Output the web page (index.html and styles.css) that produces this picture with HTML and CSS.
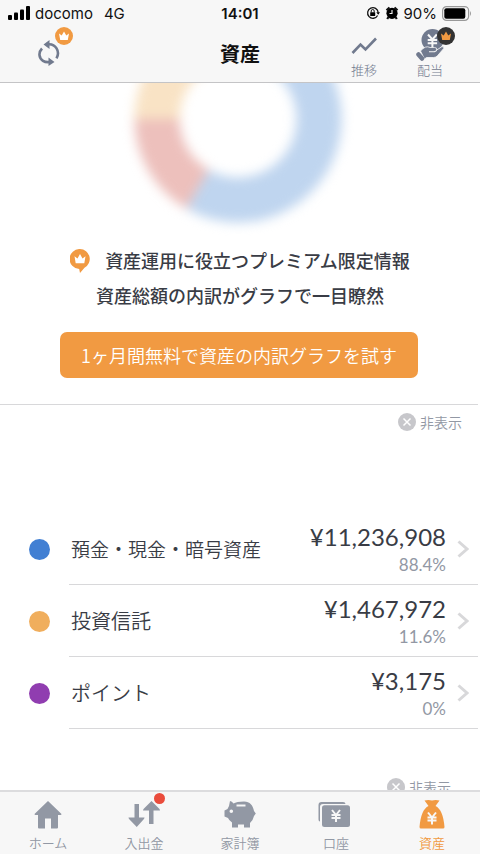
FILE: index.html
```html
<!DOCTYPE html>
<html lang="ja">
<head>
<meta charset="utf-8">
<meta name="viewport" content="width=device-width, initial-scale=1">
<title>資産</title>
<link rel="stylesheet" href="styles.css">
</head>
<body>
<div class="app">
  <header class="top">
    <div class="status">
      <div class="status-side">
        <svg class="signal" viewBox="0 0 22 14" aria-hidden="true"><rect x="0" y="9" width="4" height="5" rx="1"/><rect x="6" y="6.500" width="4" height="7.500" rx="1"/><rect x="12" y="3.500" width="4" height="10.500" rx="1"/><rect x="18" y="0" width="4" height="14" rx="1"/></svg>
        <span>docomo</span><span class="network">4G</span>
      </div>
      <time class="clock">14:01</time>
      <div class="status-side status-right">
        <svg class="lock" viewBox="0 0 14 14" aria-hidden="true"><path d="M11.600 9.500A5.300 5.300 0 1 1 12.200 6.500" fill="none" stroke="#111" stroke-width="1.300"/><path d="M10.300 6.200h3.700l-1.800 2.600z"/><rect x="4.200" y="6.200" width="5" height="3.800" rx=".5"/><path d="M5.200 6.500V5a1.500 1.500 0 0 1 3 0v1.500" fill="none" stroke="#111"/></svg>
        <svg class="alarm" viewBox="0 0 14 14" aria-hidden="true"><circle cx="7" cy="7.300" r="5.600"/><path d="M1.500 4.200 4.500 1.500M12.500 4.200 9.500 1.500M3.500 11 2.200 13M10.500 11l1.300 2" fill="none" stroke="#111" stroke-width="2.200"/><path d="M7 4v3.500H4.500" fill="none" stroke="#f7f7f7" stroke-width="1.100"/></svg>
        <span>90%</span>
        <svg class="battery" viewBox="0 0 30 15" aria-hidden="true"><rect x=".6" y=".6" width="26" height="13.800" rx="4" fill="none" stroke="#999" stroke-width="1.200"/><rect x="2.300" y="2.300" width="21" height="10.400" rx="2"/><path d="M28 5v5q2-2.500 0-5" fill="#999"/></svg>
      </div>
    </div>
    <div class="navbar">
      <button class="refresh" aria-label="更新">
        <svg viewBox="0 0 22 26" aria-hidden="true"><path d="M4 8.500C.2 12.500.8 18 5 20.800q2.500 1.600 6.500 1.200M10 4.300c7.500-.8 12.500 7 8.500 14" fill="none" stroke="#717a8e" stroke-width="2.600"/><path d="M5.500 4.500 11.500 0v9zM16.500 22 10.500 17.500v8.500z" fill="#717a8e"/></svg>
        <svg class="badge" viewBox="0 0 18 18" aria-hidden="true"><circle cx="9" cy="9" r="9" fill="#f19a42"/><path d="M4 6.500 6.700 8.500 9 4.500l2.300 4L14 6.500 12.800 13H5.200z" fill="#fff"/></svg>
      </button>
      <h1>資産</h1>
      <div class="actions">
        <button class="action">
          <svg class="trend" viewBox="0 0 28 32" aria-hidden="true"><path d="m2.500 24 8-8.500 5 5L26 9.500" fill="none" stroke="#717a8e" stroke-width="2.600"/></svg>
          <span>推移</span>
        </button>
        <button class="action">
          <svg viewBox="0 0 28 32" aria-hidden="true"><circle cx="16.500" cy="11" r="11" fill="#717a8e"/><path d="m12 5.500 4.400 5 4.400-5M16.400 10.500v8M11.700 11h9.400M11.700 14.300h9.400" fill="none" stroke="#f7f7f7" stroke-width="2"/><path d="M4.500 22q5-6 9.500-3.500h4.500q3 0 2.200 2.500l5-3.200q2.800-1 2 1.700l-6 7q-1.500 2-4 2h-7.200L8.500 30z" fill="#717a8e" stroke="#f7f7f7" stroke-width=".8"/><path d="m13 22.800 5.500-.2q2-.3 2.200-1.800" fill="none" stroke="#f7f7f7" stroke-width="1.100"/><path d="m2.500 25.500 3.500 4" stroke="#717a8e" stroke-width="4.500" stroke-linecap="round"/></svg>
          <svg class="badge" viewBox="0 0 18 18" aria-hidden="true"><circle cx="9" cy="9" r="9" fill="#333"/><path d="M4 6.500 6.700 8.500 9 4.500l2.300 4L14 6.500 12.800 13H5.200z" fill="#f19a42"/></svg>
          <span>配当</span>
        </button>
      </div>
    </div>
  </header>

  <main class="content">
    <section class="promo">
      <div class="chart-clip">
        <svg class="chart" viewBox="0 0 260 254" role="img" aria-label="資産内訳グラフ">
          <g fill="none" stroke-width="45"><path d="M129 49A81 81 0 1 1 88.500 200.100" stroke="#bfd5ef"/><path d="M88.500 200.100A81 81 0 0 1 48 130" stroke="#edc0bc"/><path d="M48 130A81 81 0 0 1 129 49" stroke="#f9e3c5"/></g>
        </svg>
      </div>
      <p class="lead"><svg class="pin" viewBox="0 0 20 24" aria-hidden="true"><path d="M10 0a10 10 0 0 1 4.500 18.800L10 24l-.8-4A10 10 0 1 1 10 0" fill="#f19a42"/><path d="M4.500 7.300 7.500 9.500 10 5l2.500 4.500 3-2.200-1.200 7H5.700z" fill="#fff"/></svg>資産運用に役立つプレミアム限定情報</p>
      <p class="lead">資産総額の内訳がグラフで一目瞭然</p>
      <button class="trial">1ヶ月間無料で資産の内訳グラフを試す</button>
    </section>
    <div class="dismiss-row">
      <button class="dismiss"><svg viewBox="0 0 18 18" aria-hidden="true"><circle cx="9" cy="9" r="9" fill="#c7c7cb"/><path d="m5.500 5.500 7 7m0-7-7 7" stroke="#fff" stroke-width="1.500"/></svg>非表示</button>
    </div>
    <ul class="assets">
      <li><a href="#deposit"><span class="dot blue"></span><span class="row"><span class="name long">預金・現金・暗号資産</span><span class="value"><strong>¥11,236,908</strong><small>88.4%</small></span><svg class="chevron" viewBox="0 0 12 18" aria-hidden="true"><path d="m1.500 1.500 8.500 7.500-8.500 7.500"/></svg></span></a></li>
      <li><a href="#fund"><span class="dot orange"></span><span class="row"><span class="name">投資信託</span><span class="value"><strong>¥1,467,972</strong><small>11.6%</small></span><svg class="chevron" viewBox="0 0 12 18" aria-hidden="true"><path d="m1.500 1.500 8.500 7.500-8.500 7.500"/></svg></span></a></li>
      <li><a href="#point"><span class="dot purple"></span><span class="row"><span class="name">ポイント</span><span class="value"><strong>¥3,175</strong><small>0%</small></span><svg class="chevron" viewBox="0 0 12 18" aria-hidden="true"><path d="m1.500 1.500 8.500 7.500-8.500 7.500"/></svg></span></a></li>
    </ul>
    <div class="dismiss-row next">
      <button class="dismiss"><svg viewBox="0 0 18 18" aria-hidden="true"><circle cx="9" cy="9" r="9" fill="#c7c7cb"/><path d="m5.500 5.500 7 7m0-7-7 7" stroke="#fff" stroke-width="1.500"/></svg>非表示</button>
    </div>
  </main>

  <nav class="tabs">
    <a href="#home"><svg viewBox="0 0 32 32" aria-hidden="true"><path d="M16 2 29.500 15q0 1-1 1H26V28.500q0 1-1 1h-6V19.500h-6v10H7q-1 0-1-1V16H3.500q-1 0-1-1z"/></svg>ホーム</a>
    <a href="#flow"><svg viewBox="0 0 32 32" aria-hidden="true"><path d="M6.500 5h4.500v13.500h5.500q0 1-1 2L8.750 28 1.500 20.500q-1-1-1-2h6zM21 25h4.500V11.500H32q0-1-1-2l-7.500-7.500-7.500 7.500q-1 1-1 2h6z"/></svg><span class="notice"></span>入出金</a>
    <a href="#budget"><svg viewBox="0 0 32 32" aria-hidden="true"><path fill-rule="evenodd" d="M6 2q2 .2 3.500 2.500 3-2 10.500-2c6 0 9 4 10 9.500l1.800 2.500L30 17q-.8 4-4 7V28.500h-6V25.500h-6V28.500H8V23.500Q5 21.500 4 19l-3.500-1.500v-6L3.500 10 5 7zM7.300 10.500a1.800 1.800 0 1 0 0 3.600A1.800 1.800 0 0 0 7.300 10.500M12.500 7.500h9v-2h-9z"/></svg>家計簿</a>
    <a href="#accounts"><svg class="cards" viewBox="0 0 32 32" aria-hidden="true"><path d="M2 22.500q-1.500 0-1.500-2V6q0-3 3-3H25q2.500 0 2.500 2H5Q2 5 2 8z"/><rect x="4" y="6.300" width="28" height="21.700" rx="2.500"/><path class="yen" d="m14 11 4 5 4-5m-4 5v7m-4.500-7h9m-9 3h9"/></svg>口座</a>
    <a class="current" href="#assets" aria-current="page"><svg viewBox="0 0 32 32" aria-hidden="true"><path d="M8.500 1.500q4-1.200 7.500 0 3.500-1.200 7.500 0L19.500 7q7.500 3.500 9 21 0 1.500-1.500 1.500H5q-1.500 0-1.500-1.500 1.500-17.500 9-21z"/><path class="yen" d="m12 13.500 4 5 4-5m-4 5v7m-4.500-7h9m-9 3h9"/></svg>資産</a>
  </nav>
</div>
</body>
</html>
```
FILE: styles.css
```css
* { box-sizing: border-box; }

body {
  margin: 0;
  background: #fff;
  color: #393c45;
  font-family: "Noto Sans CJK JP", sans-serif;
}

button {
  padding: 0;
  border: 0;
  background: none;
  color: inherit;
  font: inherit;
}

a { color: inherit; text-decoration: none; }
p, h1, ul { margin: 0; padding: 0; }
svg { display: block; flex-shrink: 0; }

.app {
  display: flex;
  flex-direction: column;
  height: 100vh;
  overflow: hidden;
}

.top {
  flex-shrink: 0;
  background: #f7f7f7;
  border-bottom: 1px solid #c4c4c6;
}

.status {
  display: grid;
  grid-template-columns: 1fr auto 1fr;
  align-items: center;
  height: 26px;
  padding: 0 8px;
  color: #111;
  font-family: Inter, sans-serif;
  font-size: 15px;
}

.status-side { display: flex; align-items: center; gap: 5px; }
.status-right { justify-content: flex-end; }
.network { margin-left: 6px; }
.clock { font-weight: 600; }
.signal { width: 22px; height: 14px; }
.lock, .alarm { width: 14px; height: 14px; }
.battery { width: 30px; height: 15px; }

.navbar {
  display: grid;
  grid-template-columns: 1fr auto 1fr;
  height: 56px;
}

.navbar h1 {
  padding-top: 13px;
  color: #111;
  font-size: 20px;
  font-weight: 700;
  line-height: 30px;
}

.refresh {
  position: relative;
  justify-self: start;
  align-self: start;
  margin: 14px 0 0 38px;
}

.refresh svg:first-child { width: 22px; height: 26px; }

.badge {
  position: absolute;
  width: 18px;
  height: 18px;
}

.refresh .badge { top: -13px; left: 17px; }

.actions {
  display: flex;
  justify-content: flex-end;
  gap: 38px;
  padding-right: 36px;
}

.action {
  position: relative;
  display: flex;
  flex-direction: column;
  align-items: center;
  justify-content: flex-end;
  padding-bottom: 3px;
  color: #717a8e;
  font-size: 13px;
  font-weight: 300;
  line-height: 18px;
}

.action svg:first-child { width: 28px; height: 32px; }
.action .badge { top: 1px; right: -11px; }

.content {
  flex: 1;
  min-height: 0;
  overflow: hidden;
}

.promo {
  display: flex;
  flex-direction: column;
  align-items: center;
  margin-right: 2px;
  padding-bottom: 26px;
  border-bottom: 1px solid #d8d8da;
}

.chart-clip {
  display: flex;
  align-items: flex-end;
  height: 160px;
  overflow: hidden;
}

.chart { width: 260px; height: 254px; filter: blur(6px); }

.lead {
  display: flex;
  align-items: center;
  gap: 15px;
  padding-left: 2px;
  font-size: 18px;
  font-weight: 500;
  line-height: 35px;
}

.lead .pin { width: 20px; height: 24px; }

.trial {
  width: 75%;
  height: 46px;
  margin-top: 19px;
  border-radius: 7px;
  background: #f19a42;
  color: #fff;
  font-size: 18px;
  font-weight: 350;
}

.dismiss-row {
  display: flex;
  justify-content: flex-end;
  padding: 7px 18px 0 0;
}

.dismiss {
  display: flex;
  align-items: center;
  gap: 4px;
  color: #9298a4;
  font-size: 14px;
  font-weight: 350;
  line-height: 20px;
}

.dismiss svg { width: 18px; height: 18px; }
.next { padding: 48px 29px 0 0; }

.assets { margin: 81px 2px 0 29px; list-style: none; }

.assets a {
  display: flex;
  align-items: center;
  gap: 19px;
}

.dot { width: 21px; height: 21px; border-radius: 50%; }
.blue { background: #417fd3; }
.orange { background: #f0ae5d; }
.purple { background: #903db0; }

.row {
  display: flex;
  flex: 1;
  align-items: center;
  height: 72px;
  border-bottom: 1px solid #d8d8da;
}

.name { flex: 1; padding-left: 2px; font-size: 20px; font-weight: 350; }
.name.long { font-size: 19px; }

.value {
  display: flex;
  flex-direction: column;
  align-items: flex-end;
  font-family: Lato, sans-serif;
}

.value strong { font-size: 24px; font-weight: 400; line-height: 32px; }
.value small { color: #9298a4; font-size: 17px; line-height: 24px; }

.chevron {
  width: 12px;
  height: 18px;
  margin: 0 9px 0 11px;
  fill: none;
  stroke: #d8d8da;
  stroke-width: 3;
}

.tabs {
  display: grid;
  grid-template-columns: repeat(5, 1fr);
  flex-shrink: 0;
  height: 64px;
  border-top: 2px solid #dcdcde;
  background: #f7f7f7;
  fill: #9298a4;
}

.tabs a {
  position: relative;
  display: flex;
  flex-direction: column;
  align-items: center;
  padding-top: 7px;
  color: #9298a4;
  font-size: 13px;
  font-weight: 350;
  line-height: 20px;
}

.tabs svg { width: 32px; height: 32px; margin-bottom: 2px; }
.tabs .cards { margin-right: 4px; }
.tabs .current { color: #f19a42; fill: #f19a42; }
.yen { fill: none; stroke: #f7f7f7; stroke-width: 2; }

.notice {
  position: absolute;
  top: 1px;
  left: calc(50% + 10px);
  width: 11px;
  height: 11px;
  border-radius: 50%;
  background: #ea4c3c;
}
```
